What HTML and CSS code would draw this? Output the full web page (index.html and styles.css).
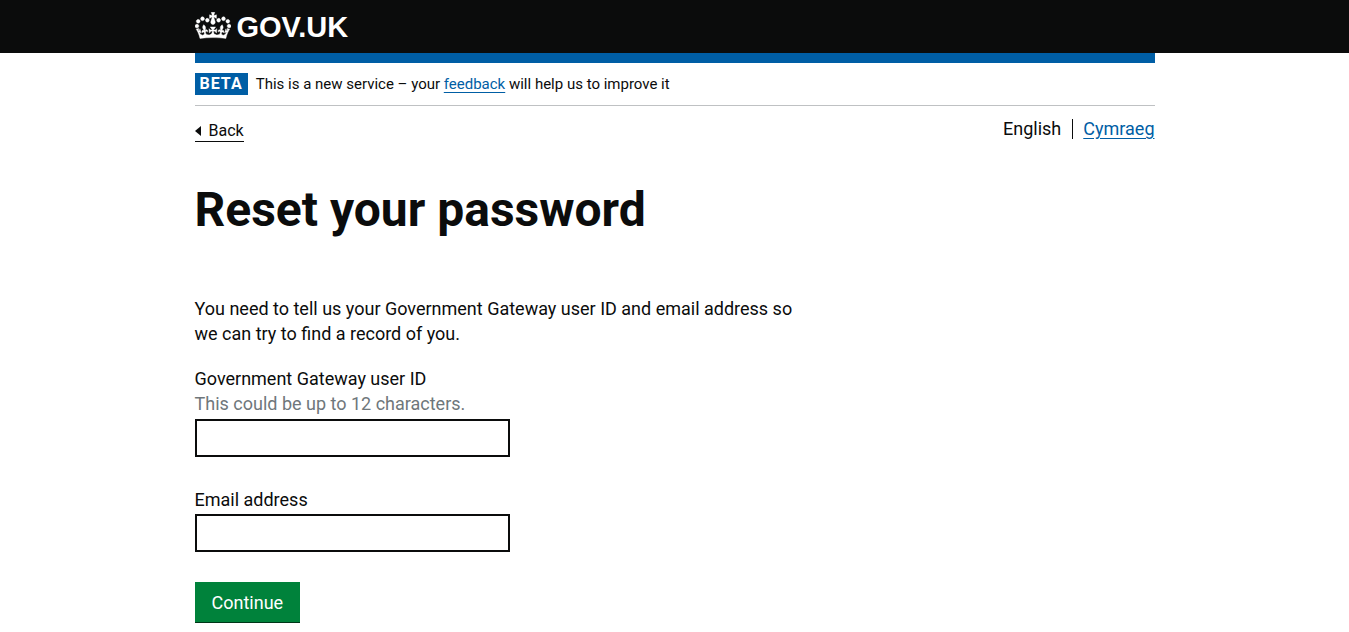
FILE: index.html
```
<!DOCTYPE html>
<html lang="en">
<head>
<meta charset="utf-8">
<meta name="viewport" content="width=device-width, initial-scale=1">
<title>Reset your password – GOV.UK</title>
<link rel="stylesheet" href="styles.css">
</head>
<body>
<header class="header">
  <div class="container">
    <a class="logo" href="#">
      <svg class="crown" viewBox="0 0 132 97" aria-hidden="true"><path fill="currentColor" stroke="currentColor" stroke-width="1.5" fill-rule="evenodd" d="M25 30.2c3.5 1.5 7.7-.2 9.1-3.7 1.5-3.6-.2-7.8-3.9-9.2-3.6-1.4-7.6.3-9.1 3.9-1.4 3.5.3 7.5 3.9 9zM9 39.5c3.6 1.5 7.8-.2 9.2-3.7 1.5-3.6-.2-7.8-3.9-9.1-3.6-1.5-7.6.2-9.1 3.8-1.4 3.5.3 7.5 3.8 9zM4.4 57.2c3.5 1.5 7.7-.2 9.1-3.8 1.5-3.6-.2-7.7-3.9-9.1-3.5-1.5-7.6.3-9.1 3.8-1.4 3.5.3 7.6 3.9 9.1zm38.3-21.4c3.5 1.5 7.7-.2 9.1-3.8 1.5-3.6-.2-7.7-3.9-9.1-3.6-1.5-7.6.3-9.1 3.8-1.3 3.6.4 7.7 3.9 9.1zm64.4-5.6c-3.6 1.5-7.8-.2-9.1-3.7-1.5-3.6.2-7.8 3.8-9.2 3.6-1.4 7.7.3 9.2 3.9 1.3 3.5-.4 7.5-3.9 9zm15.9 9.3c-3.6 1.5-7.7-.2-9.1-3.7-1.5-3.6.2-7.8 3.7-9.1 3.6-1.5 7.7.2 9.2 3.8 1.5 3.5-.3 7.5-3.8 9zm4.7 17.7c-3.6 1.5-7.8-.2-9.2-3.8-1.5-3.6.2-7.7 3.9-9.1 3.6-1.5 7.7.3 9.2 3.8 1.3 3.5-.4 7.6-3.9 9.1zM89.3 35.8c-3.6 1.5-7.8-.2-9.2-3.8-1.4-3.6.2-7.7 3.9-9.1 3.6-1.5 7.7.3 9.2 3.8 1.4 3.6-.3 7.7-3.9 9.1zM69.7 17.7l8.9 4.7V9.3l-8.9 2.8c-.2-.3-.5-.6-.9-.9L72.4 0H59.6l3.5 11.2c-.3.3-.6.5-.9.9l-8.8-2.8v13.1l8.8-4.7c.3.3.6.7.9.9l-5 15.4v.1c-.2.8-.4 1.6-.4 2.4 0 4.1 3.1 7.5 7 8.1h.2c.3 0 .7.1 1 .1.4 0 .7 0 1-.1h.2c4-.6 7.1-4.1 7.1-8.1 0-.8-.1-1.7-.4-2.4V34l-5.1-15.4c.4-.2.7-.6 1-.9zM66 92.8c16.9 0 32.8 1.1 47.1 3.2 4-16.9 8.9-26.7 14-33.5l-9.6-3.4c1 4.9 1.1 7.2 0 10.2-1.5-1.4-3-4.3-4.2-8.7L108.6 76c2.8-2 5-3.2 7.5-3.3-4.4 9.4-10 11.9-13.6 11.2-4.3-.8-6.3-4.6-5.6-7.9 1-4.7 5.7-5.9 8-.5 4.3-8.7-3-11.4-7.6-8.8 7.1-7.2 7.9-13.5 2.1-21.1-8 6.1-8.1 12.3-4.5 20.8-4.7-5.4-12.1-2.5-9.5 6.2 3.4-5.2 7.9-2 7.2 3.1-.6 4.3-6.4 7.8-13.5 7.2-10.3-.9-10.9-8-11.2-13.8 2.5-.5 7.1 1.8 11 7.3L80.2 60c-4.1 4.4-8 5.3-12.3 5.4 1.4-4.4 8-11.6 8-11.6H55.5s6.4 7.2 7.9 11.6c-4.2-.1-8-1-12.3-5.4l1.4 16.4c3.9-5.5 8.5-7.7 10.9-7.3-.3 5.8-.9 12.8-11.1 13.8-7.2.6-12.9-2.9-13.5-7.2-.7-5 3.8-8.3 7.1-3.1 2.7-8.7-4.6-11.6-9.4-6.2 3.7-8.5 3.6-14.7-4.6-20.8-5.8 7.6-5 13.9 2.2 21.1-4.7-2.6-11.9.1-7.7 8.8 2.3-5.5 7.1-4.2 8.1.5.7 3.3-1.3 7.1-5.7 7.9-3.5.7-9-1.8-13.5-11.2 2.5.1 4.7 1.3 7.5 3.3l-4.7-15.4c-1.2 4.4-2.7 7.2-4.3 8.7-1.1-3-.9-5.3 0-10.2l-9.5 3.4c5 6.9 9.9 16.7 14 33.5 14.8-2.1 30.8-3.2 47.7-3.2z"/></svg>
      <span>GOV.UK</span>
    </a>
  </div>
</header>
<div class="container">
  <div class="bar"></div>
  <div class="phase">
    <strong class="tag">BETA</strong>
    <span>This is a new service – your <a class="link" href="#">feedback</a> will help us to improve it</span>
  </div>
  <div class="tools">
    <a class="back" href="#"><span class="arrow"></span>Back</a>
    <nav class="languages" aria-label="Language">
      <span class="current">English</span>
      <a class="link" href="#" lang="cy">Cymraeg</a>
    </nav>
  </div>
  <main class="main">
    <h1 class="title">Reset your password</h1>
    <p class="intro">You need to tell us your Government Gateway user ID and email address so we can try to find a record of you.</p>
    <form class="form">
      <div class="field">
        <label for="user-id">Government Gateway user ID</label>
        <span class="hint" id="user-id-hint">This could be up to 12 characters.</span>
        <input class="input" id="user-id" type="text" aria-describedby="user-id-hint">
      </div>
      <div class="field">
        <label for="email">Email address</label>
        <input class="input" id="email" type="email">
      </div>
      <button class="button" type="submit">Continue</button>
    </form>
  </main>
</div>
</body>
</html>
```
FILE: styles.css
```
*, *::before, *::after { box-sizing: border-box; }
body {
  margin: 0;
  background: #fff;
  color: #0b0c0c;
  font: 18px/25px Roboto, "Noto Sans", sans-serif;
}
.container { max-width: 960px; margin: 0 auto; }
.header { background: #0b0c0c; padding: 10px 0 8px; }
.logo {
  display: inline-flex;
  align-items: center;
  gap: 6px;
  color: #fff;
  font: bold 29px/35px "Liberation Sans", Arial, sans-serif;
  text-decoration: none;
  vertical-align: top;
}
.crown { width: 36px; height: 27px; margin-bottom: 4px; }
.bar { height: 10px; background: #005ea5; }
.phase {
  display: flex;
  align-items: center;
  gap: 8px;
  padding: 10px 0;
  border-bottom: 1px solid #bfc1c3;
  font-size: 15px;
  line-height: 22px;
}
.tag {
  padding: 0 5px;
  background: #005ea5;
  color: #fff;
  font-size: 16px;
  letter-spacing: 1px;
}
.link { color: #005ea5; text-underline-offset: 3px; }
.tools {
  display: flex;
  align-items: flex-start;
  justify-content: space-between;
  padding-top: 10px;
}
.back {
  display: flex;
  align-items: center;
  margin-top: 5px;
  border-bottom: 1px solid #0b0c0c;
  color: #0b0c0c;
  font-size: 16px;
  line-height: 20px;
  text-decoration: none;
}
.arrow {
  margin-right: 8px;
  border: solid transparent;
  border-width: 5px 6px 5px 0;
  border-right-color: #0b0c0c;
}
.languages { display: flex; align-items: center; }
.current {
  margin-right: 10px;
  padding-right: 11px;
  border-right: 1px solid #0b0c0c;
  line-height: 20px;
}
.main { max-width: 630px; padding-top: 43px; }
.title { margin: 0 0 61px; font-size: 48px; line-height: 50px; }
.intro { max-width: 610px; margin: 0 0 20px; }
.field { display: flex; flex-direction: column; margin-bottom: 30px; }
.hint { margin-bottom: 1px; color: #6f777b; }
.input {
  width: 50%;
  height: 38px;
  margin-top: 2px;
  padding: 5px;
  border: 2px solid #0b0c0c;
  border-radius: 0;
  background: #fff;
  font: inherit;
}
.button {
  padding: 8px 17px;
  border: 0;
  background: #00823b;
  box-shadow: inset 0 -1px #003618;
  color: #fff;
  font: inherit;
}
```
